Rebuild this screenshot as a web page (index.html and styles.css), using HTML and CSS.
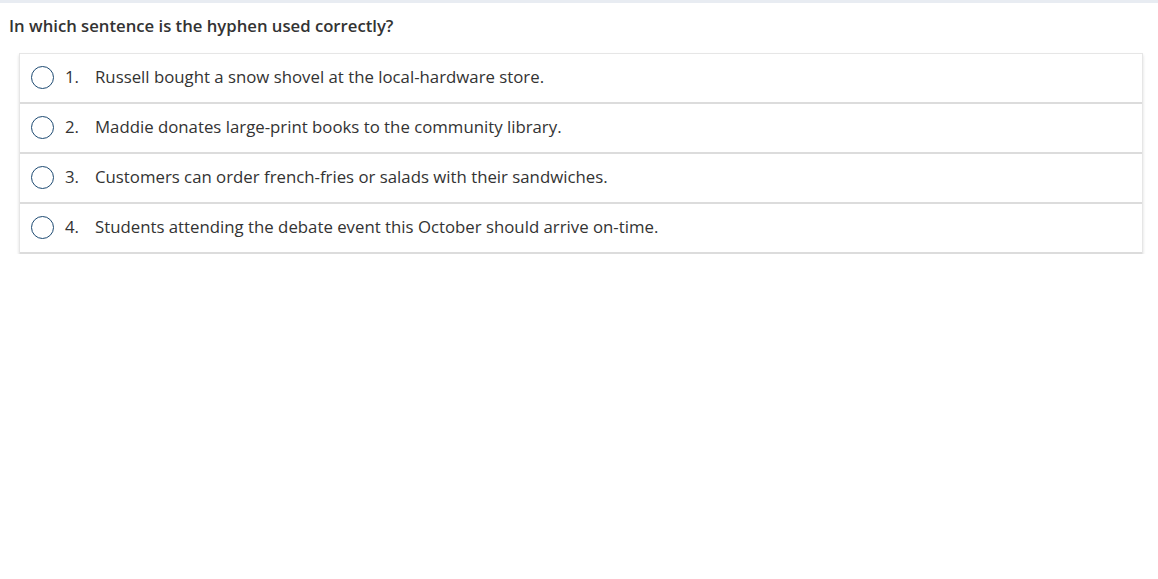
FILE: index.html
```html
<!DOCTYPE html>
<html>
<head>
<meta charset="utf-8">
<link rel="stylesheet" href="styles.css">
</head>
<body>
<div class="topbar"></div>
<main class="content">
  <h1 class="question">In which sentence is the hyphen used correctly?</h1>
  <ul class="options">
    <li class="option"><span class="radio"></span><span class="num">1.</span><span class="text">Russell bought a snow shovel at the local-hardware store.</span></li>
    <li class="option"><span class="radio"></span><span class="num">2.</span><span class="text">Maddie donates large-print books to the community library.</span></li>
    <li class="option"><span class="radio"></span><span class="num">3.</span><span class="text">Customers can order french-fries or salads with their sandwiches.</span></li>
    <li class="option"><span class="radio"></span><span class="num">4.</span><span class="text">Students attending the debate event this October should arrive on-time.</span></li>
  </ul>
</main>
</body>
</html>
```

FILE: styles.css
```css
html, body {
  margin: 0;
  padding: 0;
  background: #fff;
  font-family: "Open Sans", "Liberation Sans", sans-serif;
  color: #333;
}
.topbar {
  height: 3px;
  background: #e8ecf2;
}
.content {
  padding: 0 15px 0 9px;
}
.question {
  margin: 0;
  padding-top: 11px;
  font-size: 16.7px;
  font-weight: 600;
  line-height: 23px;
  color: #333;
}
.options {
  list-style: none;
  margin: 16px 0 0 10px;
  padding: 0;
  width: 1124px;
  box-sizing: border-box;
  border: 1px solid #e6e6e6;
  border-bottom: none;
  box-shadow: 0 2px 3px rgba(0,0,0,0.14);
}
.option {
  display: flex;
  align-items: center;
  height: 48px;
  border-bottom: 2px solid #dcdcdc;
  padding-left: 11px;
  font-size: 16.8px;
  line-height: 22px;
}
.option > span {
  position: relative;
  top: -1px;
}
.radio {
  width: 21px;
  height: 21px;
  border: 1.6px solid #1d4a72;
  border-radius: 50%;
  flex: none;
}
.num {
  margin-left: 11px;
  width: 30px;
}
.text {
  white-space: nowrap;
}
```
